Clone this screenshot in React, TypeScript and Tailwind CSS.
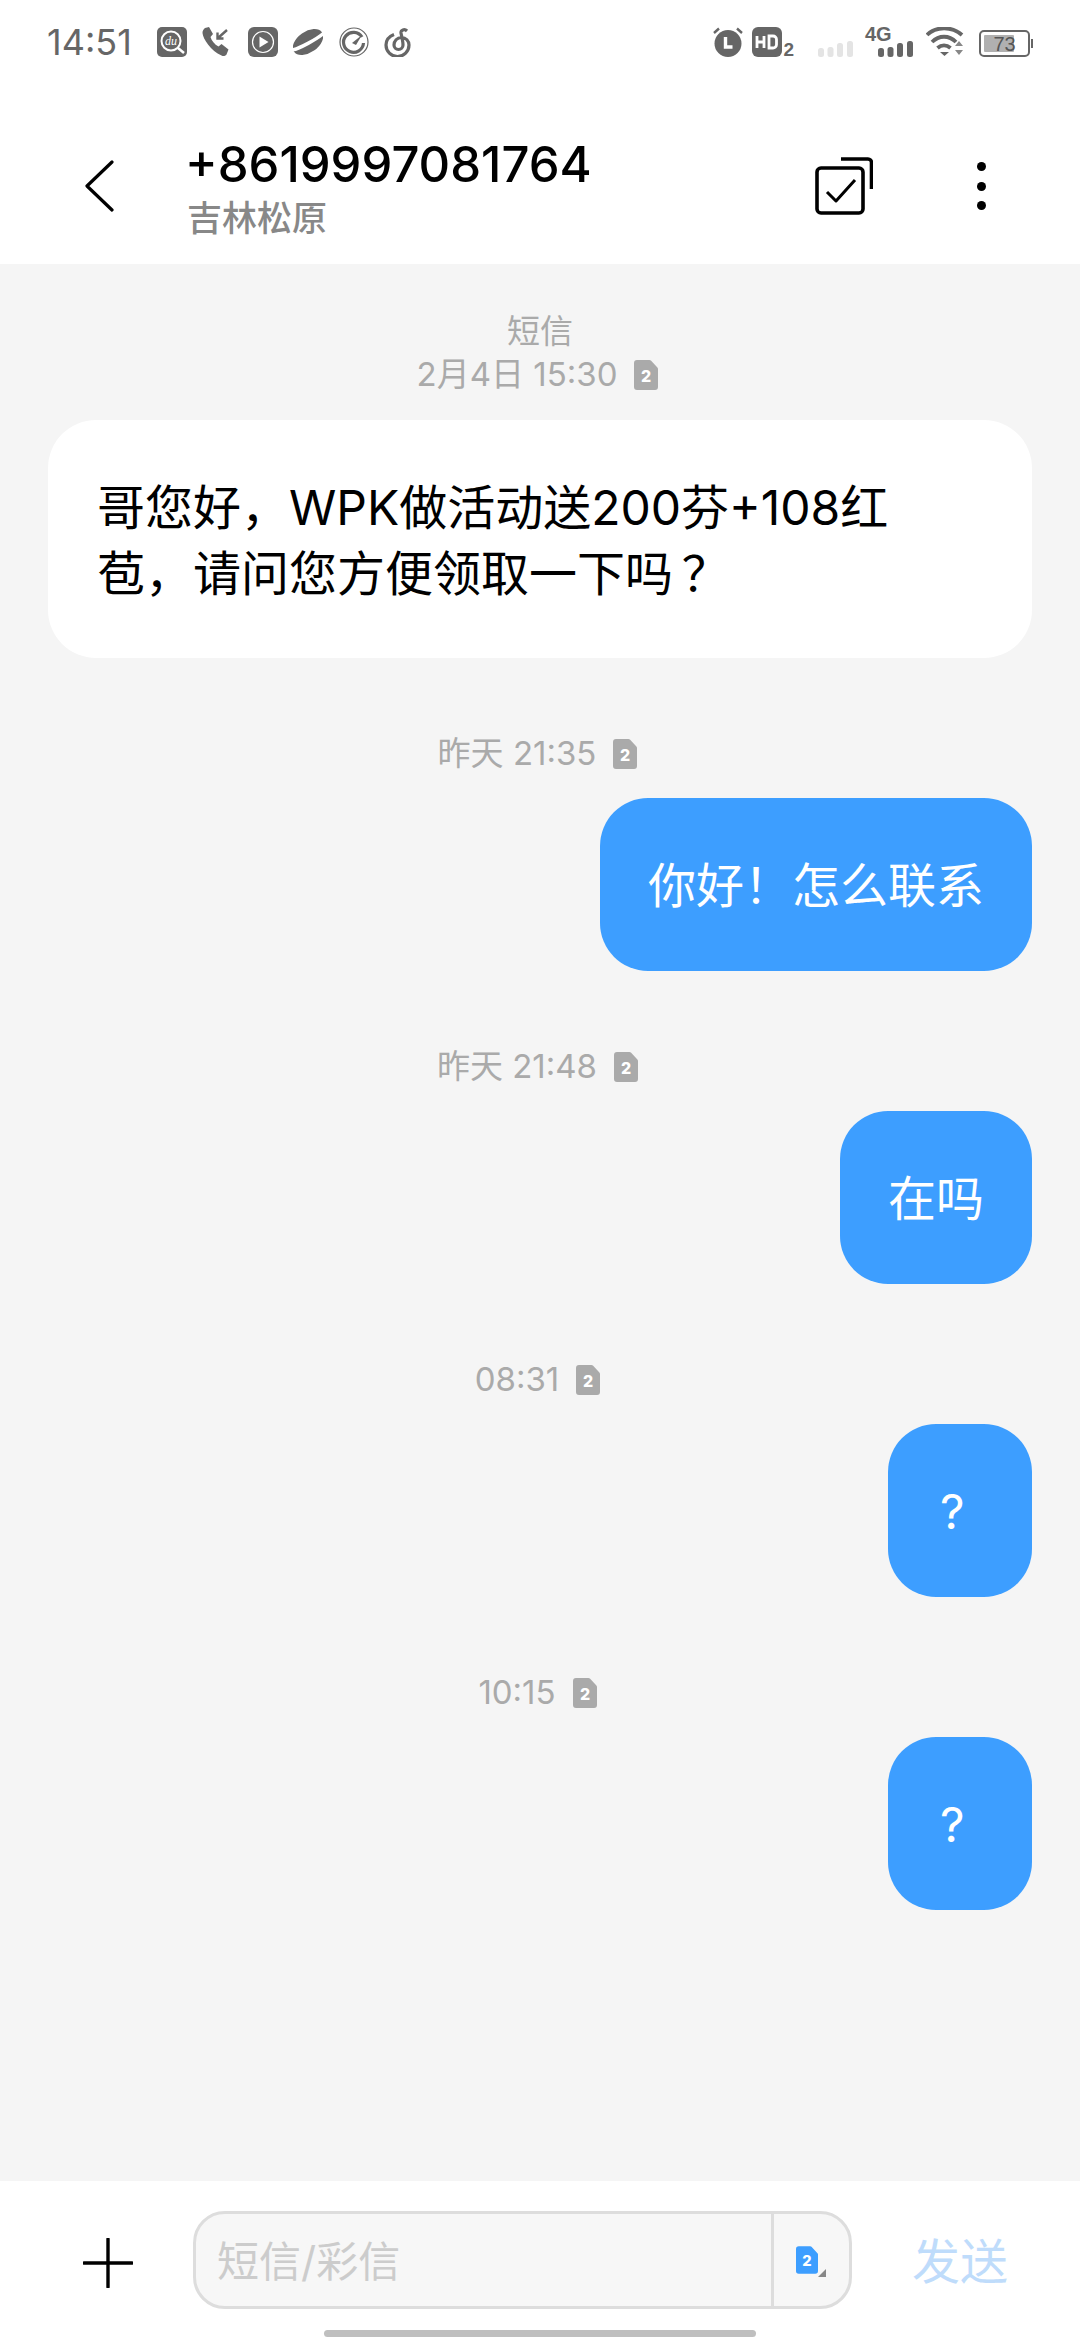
const FONT = "font-['Inter','Noto_Sans_CJK_SC',sans-serif]";

function SimIcon({ color = '#aaaaaa', className = 'w-[24px] h-[30px]' }: { color?: string; className?: string }) {
  return (
    <svg viewBox="0 0 24 30" className={className}>
      <path d="M3 0h12.500a2 2 0 0 1 1.400.6l6.500 7a2 2 0 0 1 .6 1.400V27a3 3 0 0 1-3 3H3a3 3 0 0 1-3-3V3a3 3 0 0 1 3-3z" fill={color} />
      <text x="12" y="21.500" fontSize="16" fontWeight="800" fill="#fff" textAnchor="middle" fontFamily="Inter, sans-serif">2</text>
    </svg>
  );
}

function StatusLeftIcons() {
  return (
    <div className="flex items-center gap-[15.500px] ml-[25px]">
      {/* du search */}
      <svg viewBox="0 0 30 30" className="w-[30px] h-[30px]">
        <rect width="30" height="30" rx="5" fill="#666" />
        <circle cx="14" cy="14" r="9.500" fill="none" stroke="#fff" strokeWidth="2" />
        <path d="M21 21l6 5" stroke="#fff" strokeWidth="2.500" />
        <text x="14" y="18" fontSize="12" fontStyle="italic" fill="#fff" textAnchor="middle" fontFamily="Liberation Serif, serif">du</text>
      </svg>
      {/* incoming call */}
      <svg viewBox="0 0 30 30" className="w-[30px] h-[30px]">
        <path d="M3 1l4-1 4 7-2.500 3c1 3.500 4 7.500 8 9.500l3-2.500 7 5.500-2 5c-1 1.500-3 2-5 1C9 24 1 12 0.500 6 .4 4 1.500 2 3 1z" fill="#666" />
        <path d="M25 3l-9 8M15.500 5.500v6h6" fill="none" stroke="#666" strokeWidth="2.400" />
      </svg>
      {/* video */}
      <svg viewBox="0 0 30 30" className="w-[30px] h-[30px]">
        <rect width="30" height="30" rx="6" fill="#666" />
        <circle cx="15" cy="15" r="10.500" fill="none" stroke="#fff" strokeWidth="1.200" />
        <path d="M11.500 9.500l9 5.500-9 5.500z" fill="#fff" />
      </svg>
      {/* planet */}
      <svg viewBox="0 0 30 30" className="w-[30px] h-[30px]">
        <ellipse cx="15" cy="15" rx="17" ry="10.500" transform="rotate(-35 15 15)" fill="#666" />
        <path d="M-1 23C6 22 24 12 31 6" fill="none" stroke="#fff" strokeWidth="3.500" />
      </svg>
      {/* gauge */}
      <svg viewBox="0 0 30 30" className="w-[30px] h-[30px]">
        <circle cx="15" cy="15" r="14" fill="none" stroke="#666" strokeWidth="1.200" />
        <path d="M23 10a10 10 0 1 0 1.500 6" fill="none" stroke="#666" strokeWidth="3.200" />
        <path d="M13 16l10-8-6 10z" fill="#666" />
      </svg>
      {/* netease */}
      <svg viewBox="0 0 28 30" className="w-[28px] h-[30px]">
        <path d="M10 7.500C5 9.500 2 13 2 18a11.500 11.500 0 0 0 23 0c0-4-3-7.500-7.500-7.500S10 14 10 18a4.500 4.500 0 0 0 9 0c0-4-1.500-9-2-12-.4-3 3.500-4.500 6-2" fill="none" stroke="#666" strokeWidth="3.200" />
      </svg>
    </div>
  );
}

function SignalBars({ color }: { color: string }) {
  return (
    <svg viewBox="0 0 35 16" className="w-[35px] h-[16px]">
      <rect x="0" y="7" width="6" height="9" rx="2.500" fill={color} />
      <rect x="9.500" y="6" width="6" height="10" rx="2.500" fill={color} />
      <rect x="19" y="2" width="6" height="14" rx="2.500" fill={color} />
      <rect x="29" y="0" width="6" height="16" rx="2.500" fill={color} />
    </svg>
  );
}

function StatusRightIcons() {
  return (
    <div className="flex items-center">
      {/* alarm */}
      <svg viewBox="0 0 30 30" className="w-[30px] h-[30px]">
        <circle cx="15" cy="16.500" r="13.500" fill="#666" />
        <path d="M1 6l5-4.500M29 6l-5-4.500" stroke="#666" strokeWidth="2.400" />
        <path d="M12.500 10v10h7" fill="none" stroke="#fff" strokeWidth="3.400" />
      </svg>
      {/* HD 2 */}
      <div className="relative ml-[9px] w-[42px] h-[30px]">
        <svg viewBox="0 0 30 30" className="w-[30px] h-[30px]">
          <rect width="30" height="30" rx="6" fill="#666" />
          <path d="M5 9v12M12 9v12M5 15h7" stroke="#fff" strokeWidth="2.800" />
          <path d="M17 9h4a3.500 3.500 0 0 1 3.500 3.500v5A3.500 3.500 0 0 1 21 21h-4z" fill="none" stroke="#fff" strokeWidth="2.800" />
        </svg>
        <span className="absolute right-0 bottom-[-3px] text-[19px] leading-[20px] font-bold text-[#666] font-['Liberation_Sans',sans-serif]">2</span>
      </div>
      <div className="ml-[24px] mt-[14px] flex">
        <SignalBars color="#e4e4e4" />
      </div>
      <div className="relative ml-[25px] w-[35px] h-[30px] flex items-end">
        <span className="absolute left-[-13px] top-[-3px] text-[20px] leading-[20px] font-bold text-[#666] font-['Liberation_Sans',sans-serif]">4G</span>
        <SignalBars color="#666" />
      </div>
      {/* wifi */}
      <svg viewBox="0 0 38 30" className="ml-[13px] w-[38px] h-[30px]">
        <path d="M1 8C10 -1 26 -1 36 8" fill="none" stroke="#666" strokeWidth="3.800" />
        <path d="M6 15C13 8 23 8 30 15" fill="none" stroke="#666" strokeWidth="3.800" />
        <path d="M11.500 21c4-3.500 9-3.500 13 0" fill="none" stroke="#666" strokeWidth="3.800" />
        <path d="M14 25h9l-4.500 4z" fill="#666" />
        <path d="M29 19h8l-4-5zM29 23h8l-4 5z" fill="#888" />
      </svg>
      {/* battery */}
      <div className="ml-[15px] flex items-center">
        <div className="relative w-[51px] h-[27px] mt-[3px] rounded-[5px] border-2 border-[#666] p-[3px]">
          <div className="h-full w-[73%] bg-[#b0b0b0] rounded-[1px]" />
          <span className="absolute inset-0 flex items-center justify-center text-[20px] text-[#555] font-['Liberation_Sans',sans-serif]">73</span>
        </div>
        <div className="w-[2px] h-[9px] mt-[3px] ml-[1px] bg-[#666]" />
      </div>
    </div>
  );
}

function TimeRow({ label, top }: { label: string; top?: string }) {
  return (
    <div className={`flex flex-col items-center ${top ?? 'mt-[74px]'}`}>
      <div className="flex items-center justify-center h-[44px] gap-[17px] mr-[5px] text-[33px] text-[#aaaaaa]">
        <span>{label}</span>
        <SimIcon />
      </div>
    </div>
  );
}

function SentBubble({ text, narrow }: { text: string; narrow?: boolean }) {
  return (
    <div className="flex justify-end mt-[22px]">
      <div className={`bg-[#3d9eff] rounded-[48px] pt-[54px] pb-[52px] pr-[48px] text-[48px] leading-[67px] text-white ${narrow ? 'w-[144px] pl-[52px]' : 'pl-[48px]'}`}>
        {text}
      </div>
    </div>
  );
}

export default function App() {
  return (
    <div className={`w-[1080px] h-[2340px] flex flex-col bg-white ${FONT}`}>
      {/* Status bar */}
      <div className="h-[80px] shrink-0 flex items-start justify-between pt-[27px] pl-[47px] pr-[47px]">
        <div className="flex items-center h-[30px]">
          <span className="text-[36px] leading-[30px] text-[#666]">14:51</span>
          <StatusLeftIcons />
        </div>
        <StatusRightIcons />
      </div>

      {/* Header */}
      <div className="h-[184px] shrink-0 flex items-start pl-[84px] pr-[94px]">
        <svg viewBox="0 0 30 52" className="w-[30px] h-[52px] mt-[80px]">
          <path d="M28 2L3 26l25 24" fill="none" stroke="#000" strokeWidth="3.200" strokeLinecap="round" strokeLinejoin="round" />
        </svg>
        <div className="ml-[71px] mt-[57px] flex-1">
          <div className="text-[49px] leading-[56px] font-medium text-black">+8619997081764</div>
          <div className="text-[35px] leading-[44px] text-[#888] font-medium mt-[3px] ml-[2px]">吉林松原</div>
        </div>
        <svg viewBox="0 0 58 58" className="w-[58px] h-[58px] mt-[77px]">
          <path d="M26 2h27a3.500 3.500 0 0 1 3.500 3.500V32" fill="none" stroke="#000" strokeWidth="3.600" />
          <rect x="2" y="11" width="46" height="45" rx="4" fill="none" stroke="#000" strokeWidth="3.600" />
          <path d="M12 35l9 9 19-21" fill="none" stroke="#000" strokeWidth="3" strokeLinejoin="round" />
        </svg>
        <div className="ml-[104px] mt-[82px] flex flex-col gap-[10.500px]">
          <div className="w-[9px] h-[9px] rounded-full bg-black" />
          <div className="w-[9px] h-[9px] rounded-full bg-black" />
          <div className="w-[9px] h-[9px] rounded-full bg-black" />
        </div>
      </div>

      {/* Messages */}
      <div className="flex-1 bg-[#f5f5f5] px-[48px] pt-[45px]">
        <div className="text-center text-[33px] leading-[44px] text-[#aaaaaa]">短信</div>
        <TimeRow label="2月4日 15:30" top="mt-0" />
        <div className="mt-[23px] bg-white rounded-[48px] pt-[55px] pb-[51px] pl-[49px] pr-[120px] text-[48px] leading-[66px] text-black">
          {'哥您好，WPK做活动送200芬+108红苞，请问您方便领取一下吗\u2009？'}
        </div>

        <TimeRow label="昨天 21:35" />
        <SentBubble text="你好！怎么联系" />

        <TimeRow label="昨天 21:48" />
        <SentBubble text="在吗" />

        <TimeRow label="08:31" />
        <SentBubble text="?" narrow />

        <TimeRow label="10:15" />
        <SentBubble text="?" narrow />
      </div>

      {/* Composer */}
      <div className="h-[159px] shrink-0 relative bg-white">
        <div className="flex items-start pt-[30px] pl-[83px]">
          <svg viewBox="0 0 50 50" className="w-[50px] h-[50px] mt-[27px]">
            <path d="M25 1v48M1 25h48" stroke="#000" strokeWidth="3.400" strokeLinecap="round" />
          </svg>
          <div className="ml-[60px] w-[659px] h-[98px] flex rounded-[32px] border-[3px] border-[#dddddd] bg-[#f7f7f7]">
            <div className="flex-1 flex items-center pl-[21px] pt-[3px] text-[42px] text-[#cccccc]">短信/彩信</div>
            <div className="relative w-[78px] border-l-[3px] border-[#dddddd] flex items-center pl-[22px]">
              <SimIcon color="#3d9eff" className="w-[22px] h-[28px]" />
              <div className="absolute left-[44px] top-[55px] w-0 h-0 border-l-[8px] border-l-transparent border-b-[8px] border-b-[#888]" />
            </div>
          </div>
          <div className="ml-[60px] mt-[26px] text-[48px] leading-[50px] text-[#bfdcfb]">发送</div>
        </div>
        <div className="absolute left-[324px] bottom-[3px] w-[432px] h-[7px] rounded-full bg-[#bfbfbf]" />
      </div>
    </div>
  );
}
